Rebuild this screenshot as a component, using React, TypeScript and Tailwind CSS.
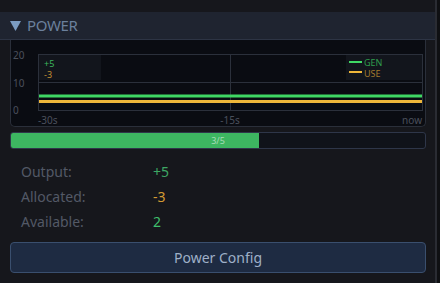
const GEN = 5;
const USE = 3;
const SLOTS = 3;
const MAX_SLOTS = 5;

function PowerChart() {
  const top = 14;
  const bottom = 70;
  const left = 27;
  const right = 411;
  const y = (v: number) => bottom - (v / 20) * (bottom - top);

  return (
    <svg width="416" height="86" className="block" style={{ fontFamily: 'Noto Sans, sans-serif' }}>
      <g fill="#4a505c" fontSize="10">
        <text x="2" y="19">20</text>
        <text x="2" y="47">10</text>
        <text x="2" y="74">0</text>
        <text x={left} y="84">-30s</text>
        <text x={(left + right) / 2} y="84" textAnchor="middle">-15s</text>
        <text x={right} y="84" textAnchor="end">now</text>
      </g>
      <rect x={left + 0.5} y={top + 0.5} width={right - left} height={bottom - top} fill="none" stroke="#2b303b" />
      <line x1={left} x2={right} y1={42.5} y2={42.5} stroke="#2b303b" />
      <line x1={219.5} x2={219.5} y1={top} y2={bottom} stroke="#2b303b" />
      <line x1={left + 1} x2={right} y1={y(GEN)} y2={y(GEN)} stroke="#3fd864" strokeWidth="3" />
      <line x1={left + 1} x2={right} y1={y(USE)} y2={y(USE)} stroke="#efb73a" strokeWidth="3" />

      <rect x={left + 1} y={15} width={62} height={25} fill="#12151c" />
      <text x={33} y={27} fontSize="9" fill="#3cb85c">+5</text>
      <text x={33} y={38} fontSize="9" fill="#c28f32">-3</text>

      <rect x={335} y={15} width={76} height={25} fill="#12151c" />
      <line x1={338} x2={351} y1={22} y2={22} stroke="#3fd864" strokeWidth="2" />
      <line x1={338} x2={351} y1={32} y2={32} stroke="#efb73a" strokeWidth="2" />
      <text x={353} y={26} fontSize="9" fill="#2f9c4c">GEN</text>
      <text x={353} y={37} fontSize="9" fill="#a27a2e">USE</text>
    </svg>
  );
}

function StatRow({ label, value, color }: { label: string; value: string; color: string }) {
  return (
    <div className="flex items-center h-[25px] text-[14px]">
      <span className="w-[132px] text-[#535966]">{label}</span>
      <span className={color}>{value}</span>
    </div>
  );
}

export default function App() {
  const pct = (SLOTS / MAX_SLOTS) * 100;

  return (
    <div className="w-[440px] h-[283px] flex bg-[#0f1013] overflow-hidden font-['Noto_Sans',sans-serif]">
      <div className="w-[435px] flex flex-col bg-[#16171c] pt-3">
        <div className="h-[28px] flex items-center gap-[6px] px-[10px] bg-[#1f2430] border-b border-[#2d3444]">
          <svg width="11" height="10" viewBox="0 0 11 10" className="shrink-0">
            <path d="M0 0 H11 L5.5 10 Z" fill="#7b9cc2" />
          </svg>
          <span className="text-[15px] text-[#6b809c] tracking-tight">POWER</span>
        </div>

        <div className="flex flex-col px-[10px]">
          <div className="w-[416px] h-[87px] bg-[#0a0c12] border border-t-0 border-[#2a2f3a] rounded-b-[5px] overflow-hidden">
            <PowerChart />
          </div>

          <div className="relative mt-[5px] h-[17px] w-[416px] bg-[#10131a] border border-[#2e3649] rounded-[3px] overflow-hidden">
            <div className="h-full bg-[#3db661]" style={{ width: `${pct}%` }} />
            <div className="absolute inset-0 flex items-center justify-center text-[9px] text-[#a6dcb8]">
              {SLOTS}/{MAX_SLOTS}
            </div>
          </div>

          <div className="flex flex-col pl-[11px] mt-[10px]">
            <StatRow label="Output:" value={`+${GEN}`} color="text-[#3ea764]" />
            <StatRow label="Allocated:" value={`-${USE}`} color="text-[#d29a33]" />
            <StatRow label="Available:" value={`${GEN - USE}`} color="text-[#3fbf6c]" />
          </div>

          <button className="mt-[8px] h-[31px] w-[416px] rounded-[4px] bg-[#1e2b42] border border-[#3a4f6e] text-[14px] text-[#9fb0c8]">
            Power Config
          </button>
        </div>
      </div>
      <div className="w-[2px] bg-[#2a2c33]" />
    </div>
  );
}
